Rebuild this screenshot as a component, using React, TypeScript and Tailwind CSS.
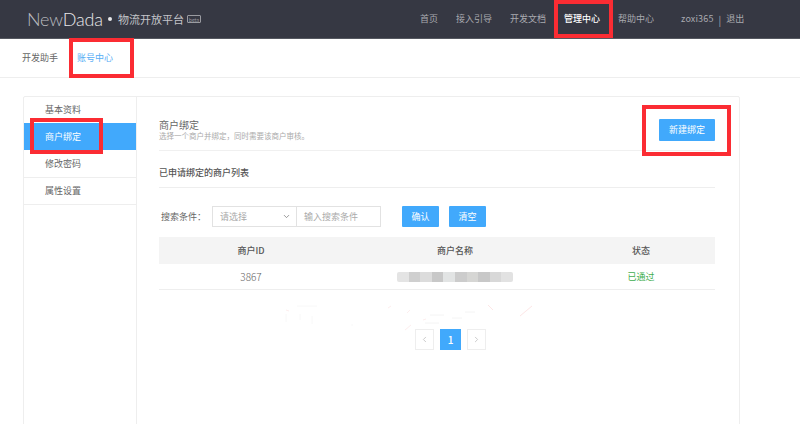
import React from "react";
import { ChevronDown, ChevronLeft, ChevronRight } from "lucide-react";

const font = { fontFamily: '"Noto Sans CJK SC", "Noto Sans", sans-serif' };

const RedBox = ({ className }: { className: string }) => (
  <div className={`absolute border-[4px] border-[#fb2c33] ${className}`} />
);

export default function App() {
  const nav = ["首页", "接入引导", "开发文档", "管理中心", "帮助中心"];
  return (
    <div className="relative h-[424px] w-[800px] overflow-hidden bg-white text-[9px] text-[#555]" style={font}>
      <header className="flex h-[39px] items-center border-b border-[#555860] bg-[#363843] pl-[27px]">
        <div className="flex w-[74px] items-baseline text-[18px] leading-none tracking-[-0.2px] font-light" style={{ fontFamily: '"Lato", sans-serif' }}>
          <span className="text-[#bbbcc0]">New</span>
          <span className="text-[#e8e8ea]">Dada</span>
        </div>
        <span className="ml-[7px] h-[4px] w-[4px] rounded-full bg-[#e8e8ea]" />
        <span className="ml-[6px] text-[11px] leading-none text-[#c4c5c9]">物流开放平台</span>
        <span className="ml-[3px] flex h-[8px] w-[14px] items-center justify-center rounded-[1px] border border-[#9a9ba1] text-[5px] leading-none text-[#9a9ba1]">beta</span>
        <nav className="ml-[219px] flex items-center gap-[18px]">
          {nav.map((n) => (
            <span key={n} className={n === "管理中心" ? "font-medium text-white" : "text-[#a9aab0]"}>{n}</span>
          ))}
        </nav>
        <span className="ml-[27px] text-[9px] tracking-[0.15px] text-[#a9aab0]">zoxi365</span>
        <span className="ml-[5px] text-[10px] text-[#a9aab0]">|</span>
        <span className="ml-[5px] text-[#a9aab0]">退出</span>
      </header>

      <div className="flex h-[39px] items-stretch gap-[19px] border-b border-[#eeeeee] pl-[22px]">
        <span className="flex items-center text-[#666]">开发助手</span>
        <span className="-mb-px flex items-center border-b border-[#6aa5f0] text-[#58aef5]">账号中心</span>
      </div>

      <div className="mt-[18px] ml-[23px] flex h-[340px] w-[717px] rounded-t-[2px] border border-[#eeeeee]">
        <aside className="w-[113px] shrink-0 border-r border-[#eeeeee]">
          <div className="flex h-[26px] items-center pl-[21px] text-[#666]">基本资料</div>
          <div className="flex h-[27px] items-center bg-[#41a9fc] pl-[21px] text-white">商户绑定</div>
          <div className="flex h-[28px] items-center border-b border-[#eeeeee] pl-[21px] text-[#666]">修改密码</div>
          <div className="flex h-[27px] items-center border-b border-[#eeeeee] pl-[21px] text-[#666]">属性设置</div>
        </aside>

        <main className="w-[578px] pl-[22px]">
          <div className="flex h-[54px] items-start justify-between border-b border-[#f0f0f0] pt-[22px]">
            <div className="flex flex-col">
              <span className="text-[10px] leading-[11px] text-[#666]">商户绑定</span>
              <span className="text-[7.5px] leading-[12px] text-[#aaa]">选择一个商户并绑定，同时需要该商户审核。</span>
            </div>
            <button className="h-[22px] w-[56px] rounded-[1px] bg-[#41a9fc] text-[9px] text-white">新建绑定</button>
          </div>

          <div className="flex h-[37px] items-center border-b border-[#eeeeee] pt-[8px] font-medium text-[#555]">已申请绑定的商户列表</div>

          <div className="mt-[18px] flex h-[21px] items-center">
            <span className="ml-[2px] w-[51px] text-[#666]">搜索条件：</span>
            <div className="flex h-[21px] w-[85px] items-center justify-between border border-[#e2e2e2] pl-[7px] pr-[5px] text-[#aaa]">
              请选择
              <ChevronDown size={9} strokeWidth={2} className="text-[#777]" />
            </div>
            <div className="-ml-px flex h-[21px] w-[85px] items-center border border-[#e2e2e2] pl-[7px] text-[#aaa]">输入搜索条件</div>
            <button className="ml-[21px] h-[21px] w-[37px] rounded-[1px] bg-[#41a9fc] text-white">确认</button>
            <button className="ml-[10px] h-[21px] w-[37px] rounded-[1px] bg-[#41a9fc] text-white">清空</button>
          </div>

          <div className="mt-[10px] w-[556px]">
            <div className="grid h-[27px] grid-cols-[184px_224px_148px] items-center bg-[#f4f4f4] text-center font-medium text-[#555]">
              <span>商户ID</span>
              <span>商户名称</span>
              <span>状态</span>
            </div>
            <div className="grid h-[26px] grid-cols-[184px_224px_148px] items-center border-b border-[#eeeeee] text-center text-[#666]">
              <span className="text-[10px] font-light">3867</span>
              <span className="mx-auto flex h-[10px] w-[116px] overflow-hidden rounded-[2px]">
                {["#e4e4e4", "#cfcfcf", "#dcdcdc", "#c8c8c8", "#e2e4e4", "#cccccc", "#d6d6d4", "#c8c8c8", "#d8d8d8", "#e2e2e2"].map((c, i) => (
                  <i key={i} className="flex-1" style={{ backgroundColor: c }} />
                ))}
              </span>
              <span className="text-[#3fae4f]">已通过</span>
            </div>
          </div>

          <div className="mt-[39px] ml-[256px] flex h-[21px] items-stretch gap-[6px]">
            <span className="flex w-[19px] items-center justify-center border border-[#eeeeee] text-[#bbb]">
              <ChevronLeft size={9} strokeWidth={2} />
            </span>
            <span className="flex w-[21px] items-center justify-center bg-[#41a9fc] text-[10px] font-medium text-white">1</span>
            <span className="flex w-[19px] items-center justify-center border border-[#eeeeee] text-[#bbb]">
              <ChevronRight size={9} strokeWidth={2} />
            </span>
          </div>
        </main>
      </div>

      <svg className="absolute left-[280px] top-[298px]" width="280" height="34" fill="none" strokeWidth="1">
        <path d="M17 8h20M6 16v8M20 16v6M32 18v8M72 26v2" stroke="#f8f8f8" />
        <path d="M6 12l3 1M130 12l-3 3M125 32l6-5M108 10l3-2M143 22l3-1" stroke="#fdeeee" />
        <path d="M150 17h14M145 25h14M185 14h10M172 20h10" stroke="#f4f4f4" />
        <path d="M208 7l5 5M240 18l12-10" stroke="#fde6e6" />
      </svg>

      <RedBox className="left-[554px] top-0 h-[38px] w-[59px]" />
      <RedBox className="left-[69px] top-[38px] h-[40px] w-[65px]" />
      <RedBox className="left-[30px] top-[118px] h-[36px] w-[73px]" />
      <RedBox className="left-[642px] top-[105px] h-[51px] w-[89px]" />
    </div>
  );
}
